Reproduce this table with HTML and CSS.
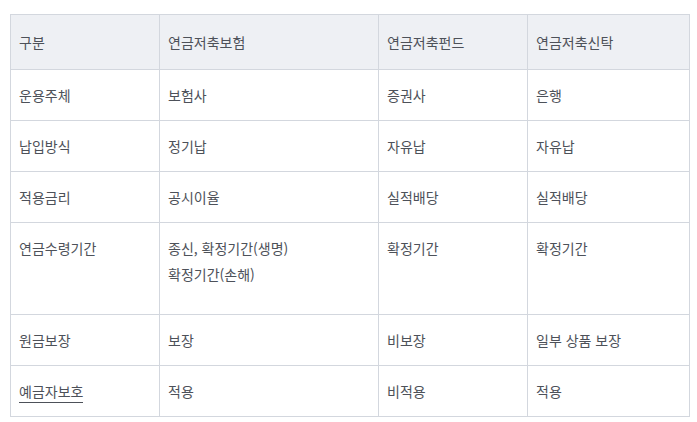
FILE: index.html
```html
<!DOCTYPE html>
<html lang="ko">
<head>
<meta charset="utf-8">
<link rel="stylesheet" href="styles.css">
</head>
<body>
<table class="cmp">
  <colgroup>
    <col class="c1"><col class="c2"><col class="c3"><col class="c4">
  </colgroup>
  <thead>
    <tr><th>구분</th><th>연금저축보험</th><th>연금저축펀드</th><th>연금저축신탁</th></tr>
  </thead>
  <tbody>
    <tr><td>운용주체</td><td>보험사</td><td>증권사</td><td>은행</td></tr>
    <tr><td>납입방식</td><td>정기납</td><td>자유납</td><td>자유납</td></tr>
    <tr><td>적용금리</td><td>공시이율</td><td>실적배당</td><td>실적배당</td></tr>
    <tr class="tall"><td>연금수령기간</td><td>종신, 확정기간(생명)<br>확정기간(손해)</td><td>확정기간</td><td>확정기간</td></tr>
    <tr><td>원금보장</td><td>보장</td><td>비보장</td><td>일부 상품 보장</td></tr>
    <tr><td><span class="link">예금자보호</span></td><td>적용</td><td>비적용</td><td>적용</td></tr>
  </tbody>
</table>
</body>
</html>
```
FILE: styles.css
```css
html, body {
  margin: 0;
  background: #fff;
}
body {
  padding: 14px 9px 0 10px;
  font-family: "Noto Sans CJK KR", "Noto Sans", sans-serif;
  font-size: 14px;
  color: #4d5159;
}
.cmp {
  border-collapse: collapse;
  width: 679px;
  table-layout: fixed;
}
.c1 { width: 149px; }
.c2 { width: 219px; }
.c3 { width: 149px; }
.c4 { width: 162px; }
.cmp th, .cmp td {
  border: 1px solid #d3d7de;
  text-align: left;
  vertical-align: top;
  font-weight: 400;
  line-height: 26px;
  padding: 12px 8px 12px 8px;
}
.cmp th {
  background: #eef0f4;
  padding: 14px 8px 14px 8px;
}
.cmp tr.tall td {
  padding-bottom: 27px;
}
.link {
  border-bottom: 1px solid #4d5159;
  padding-bottom: 1px;
}
```
